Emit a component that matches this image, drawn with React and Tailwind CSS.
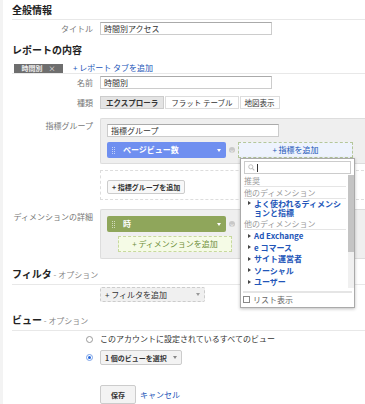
import React from "react";

const font = { fontFamily: '"Noto Sans CJK JP", "Noto Sans", sans-serif' };

const Label = ({ children, className = "" }) => (
  <div className={`w-[88px] shrink-0 pr-[7px] text-right text-[8px] leading-[12px] text-[#777] ${className}`}>
    {children}
  </div>
);

const TextInput = ({ value }) => (
  <div className="h-[13px] w-[172px] border border-[#ccc] border-t-[#aaa] bg-white px-[3px] text-[8px] leading-[11px] text-[#333]">
    {value}
  </div>
);

const SectionTitle = ({ title, sub }) => (
  <div className="border-b border-[#e8e8e8] pb-[3px] text-[10px] font-bold leading-[12px] text-[#222]">
    {title}
    {sub && <span className="text-[8px] font-normal text-[#888]"> - {sub}</span>}
  </div>
);

const Grip = () => (
  <span className="mr-[8px] flex flex-col gap-[1px] opacity-60">
    {[0, 1, 2, 3].map((i) => (
      <span key={i} className="flex gap-[1px]">
        <span className="h-[1px] w-[1px] bg-white" />
        <span className="h-[1px] w-[1px] bg-white" />
      </span>
    ))}
  </span>
);

const Caret = ({ color = "white" }) => (
  <span
    className="h-0 w-0 border-x-[2.5px] border-t-[3px] border-x-transparent"
    style={{ borderTopColor: color }}
  />
);

const Remove = () => (
  <span className="mx-[3px] flex h-[6px] w-[6px] items-center justify-center rounded-full bg-[#c8c8c8] text-[5px] leading-none text-white">
    ×
  </span>
);

const Dropdown = () => (
  <div className="absolute left-[237px] top-[158px] z-10 w-[115px] border border-[#aaa] bg-white shadow-[0_1px_3px_rgba(0,0,0,0.25)]">
    <div className="mx-[3px] mt-[2px] flex h-[13px] items-center border border-[#ccc] bg-white px-[3px]">
      <svg width="7" height="7" viewBox="0 0 10 10">
        <circle cx="4" cy="4" r="3" fill="none" stroke="#bbb" strokeWidth="1.3" />
        <path d="M6.2 6.2 9 9" stroke="#bbb" strokeWidth="1.5" />
      </svg>
      <span className="ml-[2px] h-[8px] w-[1px] bg-[#333]" />
    </div>
    <div className="flex">
      <div className="flex-1 pl-[3px] pr-[2px] text-[8px] leading-[11px]">
        <div className="mt-[1px] border-b border-[#e5e5e5] text-[#999]">推奨</div>
        <div className="border-b border-[#e5e5e5] text-[#999]">他のディメンション</div>
        <div className="flex pl-[4px] font-bold leading-[9px] text-[#2255b8]">
          <span className="mr-[3px] mt-[2px] h-0 w-0 border-y-[2.5px] border-l-[3px] border-y-transparent border-l-[#444]" />
          <span>よく使われるディメンションと指標</span>
        </div>
        <div className="mt-[1px] border-b border-[#e5e5e5] text-[#999]">他のディメンション</div>
        {["Ad Exchange", "e コマース", "サイト運営者", "ソーシャル", "ユーザー"].map((t) => (
          <div key={t} className="flex items-center pl-[4px] font-bold leading-[11.5px] text-[#2255b8]">
            <span className="mr-[3px] h-0 w-0 border-y-[2.5px] border-l-[3px] border-y-transparent border-l-[#444]" />
            {t}
          </div>
        ))}
      </div>
      <div className="mt-[1px] w-[6px] bg-[#f0f0f0]">
        <div className="h-[77px] w-[6px] bg-[#c4c4c4]" />
      </div>
    </div>
    <div className="mx-[2px] mt-[3px] flex items-center border-t-2 border-[#e5e5e5] pb-[2px] pt-[1px] text-[8px] leading-[11px] text-[#666]">
      <span className="mr-[3px] h-[7px] w-[7px] border border-[#888] bg-white" />
      リスト表示
    </div>
  </div>
);

export default function App() {
  return (
    <div className="relative h-[404px] w-[365px] overflow-hidden border-l-[3px] border-[#f3f3f3] bg-white leading-[12px]" style={font}>
      <div className="pl-[9px] pt-[4px]">
        <SectionTitle title="全般情報" />
        <div className="mt-[2px] flex items-center">
          <Label>タイトル</Label>
          <TextInput value="時間別アクセス" />
        </div>

        <div className="mt-[9px] text-[10px] font-bold leading-[12px] text-[#222]">レポートの内容</div>
        <div className="mt-[7px] flex items-end border-b border-[#e8e8e8]">
          <div className="ml-[2px] flex h-[9px] w-[49px] items-center justify-center gap-[6px] bg-[#6e6e6e] text-[7px] font-bold leading-[9px] text-[#eee]">
            <span>時間別</span>
            <span className="font-normal">×</span>
          </div>
          <div className="ml-[10px] text-[8px] leading-[10px] text-[#2255b8]">+ レポート タブを追加</div>
        </div>
        <div className="mt-[2px] flex items-center">
          <Label>名前</Label>
          <TextInput value="時間別" />
        </div>
        <div className="mt-[7px] flex items-center">
          <Label>種類</Label>
          <div className="flex gap-[1px] text-[7.5px] leading-[11px] text-[#333]">
            <div className="flex h-[13px] items-center border border-[#ccc] bg-[#e4e4e4] px-[5px] font-bold">エクスプローラ</div>
            <div className="flex h-[13px] items-center border border-[#ddd] bg-white px-[5px]">フラット テーブル</div>
            <div className="flex h-[13px] items-center border border-[#ddd] bg-white px-[4px]">地図表示</div>
          </div>
        </div>

        <div className="mt-[9px] flex">
          <Label className="pt-[2px]">指標グループ</Label>
          <div className="flex-1">
            <div className="-mr-[4px] rounded-l-[2px] border border-r-0 border-[#ddd] bg-[#efefef] px-[6px] pb-[5px] pt-[5px]">
              <TextInput value="指標グループ" />
              <div className="mt-[5px] flex items-center">
                <div className="flex h-[16px] w-[119px] items-center rounded-[2px] bg-[#6f8ff0] px-[5px] text-[8px] font-bold text-white">
                  <Grip />
                  <span className="flex-1">ページビュー数</span>
                  <Caret />
                </div>
                <Remove />
                <div className="mr-[7px] flex h-[16px] w-[115px] items-center justify-center border border-dashed border-[#b5c79a] bg-[#eef3fd] text-[8px] text-[#2255b8]">
                  + 指標を追加
                </div>
              </div>
            </div>
            <div className="-mr-[4px] mt-[6px] border border-r-0 border-dashed border-[#ddd] px-[6px] pb-[5px] pt-[6px]">
              <div className="inline-flex h-[14px] items-center rounded-[2px] border border-[#ccc] bg-[#f8f8f8] px-[4px] text-[7px] font-bold text-[#333]">
                + 指標グループを追加
              </div>
            </div>
          </div>
        </div>

        <div className="mt-[9px] flex">
          <Label className="pt-[2px]">ディメンションの詳細</Label>
          <div className="flex-1">
            <div className="-mr-[4px] rounded-l-[2px] border border-r-0 border-[#ddd] bg-[#efefef] px-[6px] pb-[6px] pt-[6px]">
              <div className="flex items-center">
                <div className="flex h-[16px] w-[119px] items-center rounded-[2px] bg-[#8fa65b] px-[5px] text-[8px] font-bold text-white">
                  <Grip />
                  <span className="flex-1">時</span>
                  <Caret />
                </div>
                <Remove />
              </div>
              <div className="ml-[11px] mt-[4px] flex h-[16px] w-[114px] items-center justify-center border border-dashed border-[#c8d99e] bg-[#f5fbe6] text-[8px] text-[#6f8f3a]">
                + ディメンションを追加
              </div>
            </div>
          </div>
        </div>

        <div className="mt-[9px]">
          <SectionTitle title="フィルタ" sub="オプション" />
        </div>
        <div className="mt-[2px] flex">
          <div className="w-[88px] shrink-0" />
          <div className="flex h-[15px] w-[105px] items-center justify-between rounded-[2px] border border-dashed border-[#ccc] bg-[#f0f0f0] px-[4px] text-[8px] text-[#333]">
            <span>+ フィルタを追加</span>
            <Caret color="#999" />
          </div>
        </div>

        <div className="mt-[12px]">
          <SectionTitle title="ビュー" sub="オプション" />
        </div>
        <div className="mt-[2px] flex h-[12px] items-center">
          <div className="flex w-[88px] shrink-0 justify-end pr-[7px]">
            <span className="h-[7px] w-[7px] rounded-full border border-[#999] bg-white" />
          </div>
          <span className="text-[8px] text-[#333]">このアカウントに設定されているすべてのビュー</span>
        </div>
        <div className="mt-[5px] flex items-center">
          <div className="flex w-[88px] shrink-0 justify-end pr-[7px]">
            <span className="flex h-[7px] w-[7px] items-center justify-center rounded-full border border-[#7aa2e8] bg-white">
              <span className="h-[3px] w-[3px] rounded-full bg-[#2266dd]" />
            </span>
          </div>
          <div className="flex h-[15px] items-center gap-[6px] rounded-[2px] border border-[#ccc] bg-[#f3f3f3] px-[4px] text-[7px] font-bold text-[#333]">
            <span>1 個のビューを選択</span>
            <Caret color="#888" />
          </div>
        </div>

        <div className="mt-[20px] flex items-center">
          <div className="w-[88px] shrink-0" />
          <div className="flex h-[19px] w-[36px] items-center justify-center rounded-[2px] border border-[#ccc] bg-[#f3f3f3] text-[7px] font-bold text-[#333]">
            保存
          </div>
          <span className="ml-[4px] text-[8px] text-[#2255b8]">キャンセル</span>
        </div>
      </div>
      <Dropdown />
    </div>
  );
}
